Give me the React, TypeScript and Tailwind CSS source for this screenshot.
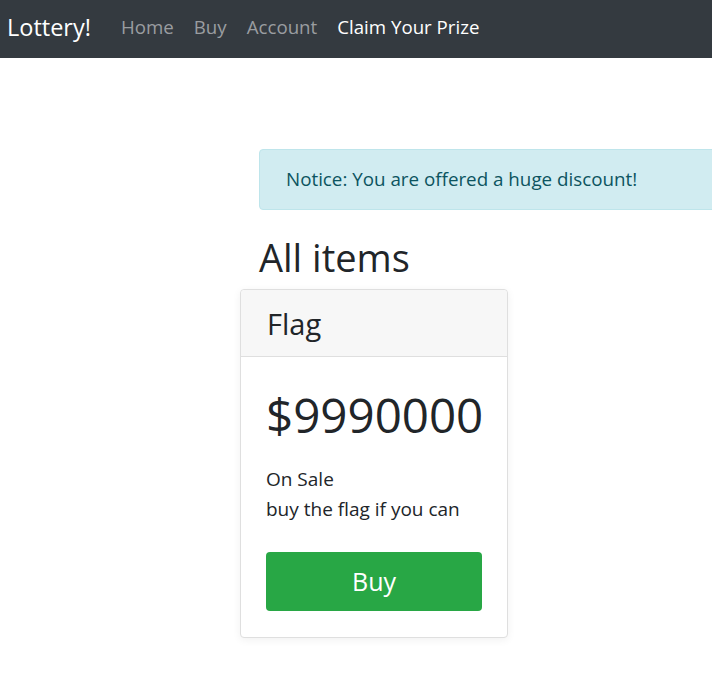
export default function App() {
  const links = [
    { label: 'Home', active: false },
    { label: 'Buy', active: false },
    { label: 'Account', active: false },
    { label: 'Claim Your Prize', active: true },
  ];

  return (
    <div
      className="min-h-[685px] w-full overflow-hidden bg-white text-[#212529]"
      style={{ fontFamily: '"Open Sans", "Noto Sans", sans-serif' }}
    >
      {/* navbar */}
      <nav className="flex h-[58px] items-center bg-[#343a40] pb-[4px] pl-[7px]">
        <span className="text-[23.5px] leading-[30px] text-white">Lottery!</span>
        <ul className="ml-[20px] flex">
          {links.map((l) => (
            <li
              key={l.label}
              className={
                'px-[10px] text-[18.7px] leading-[28px] ' +
                (l.active ? 'text-white' : 'text-[#9a9da0]')
              }
            >
              {l.label}
            </li>
          ))}
        </ul>
      </nav>

      <div className="ml-[259px] mr-[-20px] pt-[91px]">
        {/* alert */}
        <div className="flex h-[61px] items-center rounded-[4px] border border-[#bee5eb] bg-[#d1ecf1] pl-[26px] text-[18.8px] text-[#0c5460]">
          Notice: You are offered a huge discount!
        </div>

        <h1 className="mt-[24px] text-[38px] leading-[46px]">All items</h1>

        {/* card */}
        <div className="ml-[-19px] mt-[9px] w-[268px] rounded-[4px] border border-[#dfdfdf] bg-white shadow-[0_2px_8px_rgba(0,0,0,0.06)]">
          <div className="flex h-[67px] items-center rounded-t-[4px] border-b border-[#dfdfdf] bg-[#f7f7f7] pl-[26px] pt-[2px] text-[29px]">
            Flag
          </div>
          <div className="px-[25px] pb-[26px] pt-[28px]">
            <div className="text-[47.5px] leading-[60px]">$9990000</div>
            <div className="mt-[19px] text-[19px] leading-[30px]">
              <div>On Sale</div>
              <div>buy the flag if you can</div>
            </div>
            <button className="mt-[28px] flex h-[59px] w-full items-center justify-center rounded-[4px] bg-[#28a745] text-[25px] text-white">
              Buy
            </button>
          </div>
        </div>
      </div>
    </div>
  );
}
